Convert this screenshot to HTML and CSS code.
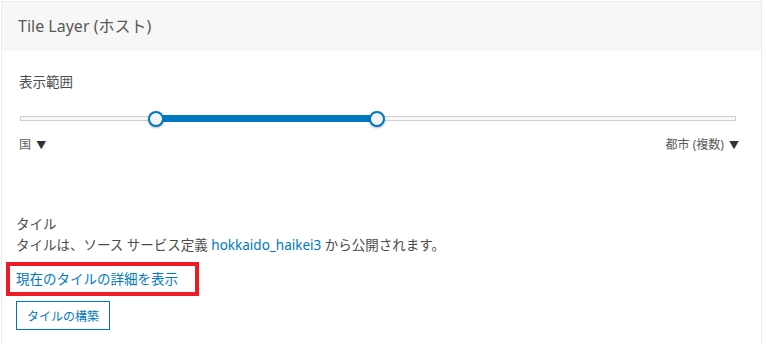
FILE: index.html
```html
<!DOCTYPE html>
<html lang="ja">
<head>
    <meta charset="UTF-8">
    <title>Tile Layer</title>
    <link rel="stylesheet" href="styles.css">
</head>
<body>

<div class="panel">
    <div class="panel-header">Tile Layer (ホスト)</div>

    <div class="panel-body">
        <div class="field-label">表示範囲</div>

        <div class="slider">
            <div class="slider-track"></div>
            <div class="slider-fill" style="left: 19%; width: 30.8%;"></div>
            <span class="slider-thumb" style="left: 19%;"></span>
            <span class="slider-thumb" style="left: 49.8%;"></span>
        </div>

        <div class="scale-labels">
            <span>国 <small>▼</small></span>
            <span>都市 (複数) <small>▼</small></span>
        </div>

        <div class="tiles">
            <div class="tiles-title">タイル</div>
            <div class="tiles-desc">タイルは、ソース サービス定義 <a href="#">hokkaido_haikei3</a> から公開されます。</div>
            <div class="highlight">
                <a href="#">現在のタイルの詳細を表示</a>
            </div>
            <button class="btn-outline">タイルの構築</button>
        </div>
    </div>
</div>

</body>
</html>
```

FILE: styles.css
```css
body {
    margin: 0;
    padding: 1px 0 0 1px;
    font-family: "Noto Sans", "Noto Sans CJK JP", sans-serif;
    color: #4c4c4c;
    background: #fff;
    overflow: hidden;
}
a {
    color: #0079c1;
    text-decoration: none;
}
.panel {
    width: 759px;
    height: 342px;
    border: 1px solid #ebebeb;
    border-bottom: none;
}
.panel-header {
    height: 49px;
    line-height: 49px;
    padding-left: 16px;
    background: #f7f7f7;
    font-size: 16px;
    color: #595959;
}
.panel-body {
    padding: 21px 25px 0 17px;
}
.field-label {
    font-size: 13.5px;
    line-height: 20px;
}
.slider {
    position: relative;
    height: 16px;
    margin-top: 19px;
    margin-left: 1px;
}
.slider-track {
    position: absolute;
    left: 0;
    right: 0;
    top: 5px;
    height: 3px;
    border: 1px solid #cfcfcf;
    background: #f8f8f8;
}
.slider-fill {
    position: absolute;
    top: 4px;
    height: 7px;
    background: #0079c1;
}
.slider-thumb {
    position: absolute;
    top: -0.5px;
    width: 12px;
    height: 12px;
    margin-left: -8px;
    border: 2px solid #0079c1;
    border-radius: 50%;
    background: #f4f4f4;
    box-shadow: 0 1px 2px rgba(0, 0, 0, 0.3);
}
.scale-labels {
    display: flex;
    justify-content: space-between;
    margin: 9px -3px 0 0;
    font-size: 12px;
    line-height: 18px;
    color: #595959;
}
.scale-labels small {
    font-size: 10px;
    color: #333;
    margin-left: 2px;
}
.tiles {
    margin-top: 60px;
    margin-left: -3px;
    font-size: 13.5px;
    line-height: 21px;
}
.highlight {
    margin: 6px 0 0 -10px;
    width: 179px;
    padding: 3px 0 2px 6px;
    border: 4px solid #ed1c24;
    line-height: 21px;
}
.btn-outline {
    display: block;
    margin-top: 5px;
    height: 29px;
    padding: 0 10px;
    font-family: inherit;
    font-size: 12px;
    color: #0079c1;
    background: #fff;
    border: 1px solid #0079c1;
    border-radius: 0;
}
```
